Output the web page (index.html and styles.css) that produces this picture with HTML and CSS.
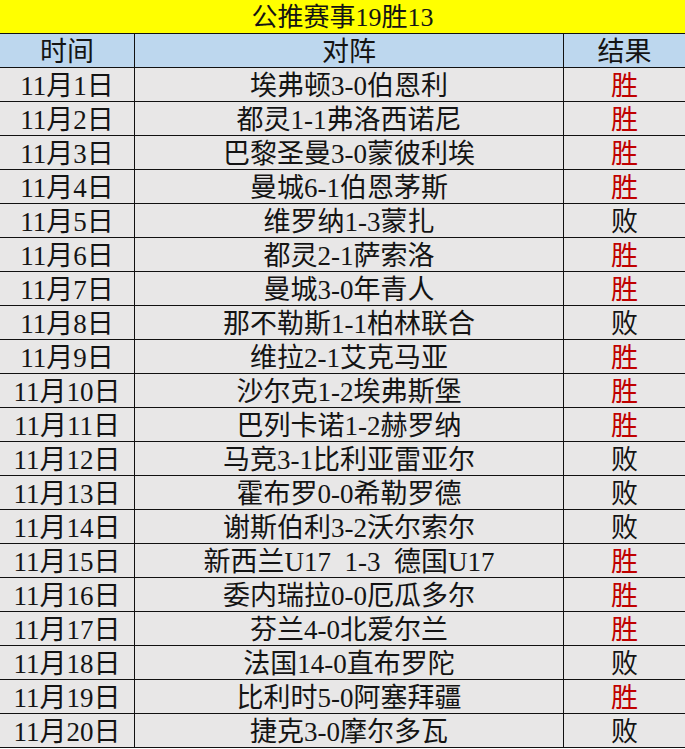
FILE: index.html
```html
<!DOCTYPE html>
<html lang="zh-CN">
<head>
<meta charset="utf-8">
<title>公推赛事19胜13</title>
<link rel="stylesheet" href="styles.css">
</head>
<body>
<div class="sheet">
  <div class="title">公推赛事19胜13</div>
  <div class="row head">
    <div class="c c1">时间</div><div class="c c2">对阵</div><div class="c c3">结果</div>
  </div>
  <div class="row"><div class="c c1">11月1日</div><div class="c c2">埃弗顿3-0伯恩利</div><div class="c c3 win">胜</div></div>
  <div class="row"><div class="c c1">11月2日</div><div class="c c2">都灵1-1弗洛西诺尼</div><div class="c c3 win">胜</div></div>
  <div class="row"><div class="c c1">11月3日</div><div class="c c2">巴黎圣曼3-0蒙彼利埃</div><div class="c c3 win">胜</div></div>
  <div class="row"><div class="c c1">11月4日</div><div class="c c2">曼城6-1伯恩茅斯</div><div class="c c3 win">胜</div></div>
  <div class="row"><div class="c c1">11月5日</div><div class="c c2">维罗纳1-3蒙扎</div><div class="c c3">败</div></div>
  <div class="row"><div class="c c1">11月6日</div><div class="c c2">都灵2-1萨索洛</div><div class="c c3 win">胜</div></div>
  <div class="row"><div class="c c1">11月7日</div><div class="c c2">曼城3-0年青人</div><div class="c c3 win">胜</div></div>
  <div class="row"><div class="c c1">11月8日</div><div class="c c2">那不勒斯1-1柏林联合</div><div class="c c3">败</div></div>
  <div class="row"><div class="c c1">11月9日</div><div class="c c2">维拉2-1艾克马亚</div><div class="c c3 win">胜</div></div>
  <div class="row"><div class="c c1">11月10日</div><div class="c c2">沙尔克1-2埃弗斯堡</div><div class="c c3 win">胜</div></div>
  <div class="row"><div class="c c1">11月11日</div><div class="c c2">巴列卡诺1-2赫罗纳</div><div class="c c3 win">胜</div></div>
  <div class="row"><div class="c c1">11月12日</div><div class="c c2">马竞3-1比利亚雷亚尔</div><div class="c c3">败</div></div>
  <div class="row"><div class="c c1">11月13日</div><div class="c c2">霍布罗0-0希勒罗德</div><div class="c c3">败</div></div>
  <div class="row"><div class="c c1">11月14日</div><div class="c c2">谢斯伯利3-2沃尔索尔</div><div class="c c3">败</div></div>
  <div class="row"><div class="c c1">11月15日</div><div class="c c2">新西兰U17&nbsp;&nbsp;1-3&nbsp;&nbsp;德国U17</div><div class="c c3 win">胜</div></div>
  <div class="row"><div class="c c1">11月16日</div><div class="c c2">委内瑞拉0-0厄瓜多尔</div><div class="c c3 win">胜</div></div>
  <div class="row"><div class="c c1">11月17日</div><div class="c c2">芬兰4-0北爱尔兰</div><div class="c c3 win">胜</div></div>
  <div class="row"><div class="c c1">11月18日</div><div class="c c2">法国14-0直布罗陀</div><div class="c c3">败</div></div>
  <div class="row"><div class="c c1">11月19日</div><div class="c c2">比利时5-0阿塞拜疆</div><div class="c c3 win">胜</div></div>
  <div class="row"><div class="c c1">11月20日</div><div class="c c2">捷克3-0摩尔多瓦</div><div class="c c3">败</div></div>
</div>
</body>
</html>
```
FILE: styles.css
```css
html, body {
  margin: 0;
  padding: 0;
  background: #ffffff;
}
.sheet {
  width: 685px;
  font-family: "Liberation Serif", "Noto Sans CJK SC", serif;
  font-size: 27px;
  color: #141414;
}
.title {
  height: 34px;
  box-sizing: border-box;
  padding-top: 2px;
  border-bottom: 1px solid #111;
  background: #ffff00;
  display: flex;
  align-items: center;
  justify-content: center;
  line-height: 1;
  font-size: 26px;
}
.row {
  display: grid;
  grid-template-columns: 135px 429px 121px;
  height: 34px;
  background: #e8e7e7;
}
.row.head {
  background: #bdd7ee;
}
.c {
  box-sizing: border-box;
  padding-top: 3px;
  border-bottom: 1px solid #111;
  display: flex;
  align-items: center;
  justify-content: center;
  line-height: 1;
  white-space: nowrap;
}
.c1, .c2 {
  border-right: 1px solid #111;
}
.win {
  color: #c00000;
}
```
